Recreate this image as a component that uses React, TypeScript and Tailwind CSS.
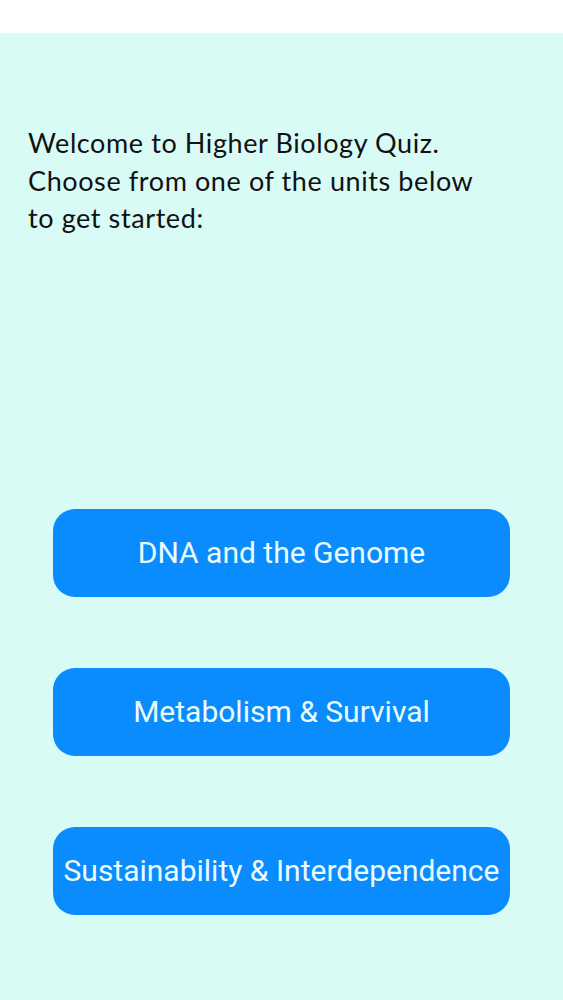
import React from 'react';

const units = ['DNA and the Genome', 'Metabolism & Survival', 'Sustainability & Interdependence'];

export default function App() {
  return (
    <div className="min-h-screen w-full bg-[#d8fbf6]">
      {/* status bar strip */}
      <div className="h-[33px] w-full bg-white" />

      <div className="px-[28px] pt-[91px]">
        <h1
          className="text-[27px] leading-[37.5px] tracking-[0.6px] text-[#111] font-normal"
          style={{ fontFamily: 'Lato, "Noto Sans", sans-serif' }}
        >
          Welcome to Higher Biology Quiz.
          <br />
          Choose from one of the units below
          <br />
          to get started:
        </h1>
      </div>

      <div className="mt-[272px] flex flex-col items-center gap-[71px]">
        {units.map((u) => (
          <button
            key={u}
            className="flex h-[88px] w-[457px] items-center justify-center rounded-[22px] bg-[#0a8cff] text-[30px] text-[#eafcfa]"
            style={{ fontFamily: 'Roboto, Inter, sans-serif' }}
          >
            {u}
          </button>
        ))}
      </div>
    </div>
  );
}
